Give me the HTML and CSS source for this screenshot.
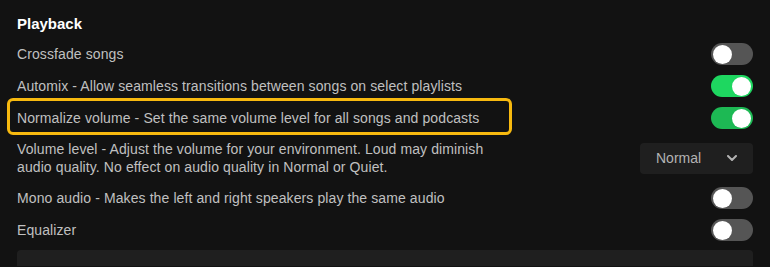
FILE: index.html
```html
<!DOCTYPE html>
<html>
<head>
<meta charset="utf-8">
<link rel="stylesheet" href="styles.css">
</head>
<body>
<section class="settings">
  <h2 class="title">Playback</h2>
  <div class="row">
    <span class="label">Crossfade songs</span>
    <span class="toggle"><span class="knob"></span></span>
  </div>
  <div class="row">
    <span class="label">Automix - Allow seamless transitions between songs on select playlists</span>
    <span class="toggle on"><span class="knob"></span></span>
  </div>
  <div class="row">
    <span class="label highlight">Normalize volume - Set the same volume level for all songs and podcasts</span>
    <span class="toggle on dim"><span class="knob"></span></span>
  </div>
  <div class="row tall">
    <span class="label wrap">Volume level - Adjust the volume for your environment. Loud may diminish audio quality. No effect on audio quality in Normal or Quiet.</span>
    <button class="select">
      <span>Normal</span>
      <svg width="10" height="6" viewBox="0 0 10 6"><path d="M1 1 L5 5 L9 1" fill="none" stroke="#b3b3b3" stroke-width="2" stroke-linecap="round" stroke-linejoin="round"/></svg>
    </button>
  </div>
  <div class="row">
    <span class="label">Mono audio - Makes the left and right speakers play the same audio</span>
    <span class="toggle"><span class="knob"></span></span>
  </div>
  <div class="row">
    <span class="label">Equalizer</span>
    <span class="toggle"><span class="knob"></span></span>
  </div>
  <div class="panel"></div>
</section>
</body>
</html>
```
FILE: styles.css
```css
html, body {
  margin: 0;
  padding: 0;
  background: #121212;
  height: 100%;
  overflow: hidden;
}
body {
  font-family: "Liberation Sans", Arial, sans-serif;
}
.settings {
  padding: 15px 17px 0 17px;
}
.title {
  margin: 0 0 5px 0;
  font-size: 15px;
  font-weight: 700;
  color: #ffffff;
  line-height: 18px;
  height: 18px;
}
.row {
  display: flex;
  align-items: center;
  justify-content: space-between;
  height: 32px;
}
.row.tall {
  height: 48px;
}
.label {
  font-size: 14px;
  color: #c0c0c0;
  line-height: 18px;
  letter-spacing: 0.1px;
}
.label.wrap {
  max-width: 495px;
}
.highlight {
  position: relative;
}
.highlight::after {
  content: "";
  position: absolute;
  left: -10px;
  top: -11px;
  width: 505px;
  height: 37px;
  box-sizing: border-box;
  border: 3px solid #f7b90f;
  border-radius: 6px;
}
.toggle {
  width: 42px;
  height: 22px;
  border-radius: 11px;
  background: #555555;
  display: flex;
  align-items: center;
  padding: 0 2px;
  box-sizing: border-box;
  flex-shrink: 0;
}
.toggle .knob {
  width: 19px;
  height: 19px;
  border-radius: 50%;
  background: #ffffff;
}
.toggle.on {
  background: #1ed760;
  justify-content: flex-end;
}
.toggle.on.dim {
  background: #1db954;
}
.select {
  width: 113px;
  height: 31px;
  background: #1f1f1f;
  border: none;
  border-radius: 4px;
  display: flex;
  align-items: center;
  justify-content: space-between;
  padding: 0 16px 0 16px;
  box-sizing: border-box;
  font-family: "Liberation Sans", Arial, sans-serif;
  font-size: 14px;
  color: #b3b3b3;
  flex-shrink: 0;
}
.panel {
  margin-top: 4px;
  height: 16px;
  background: #1f1f1f;
  border-radius: 4px 4px 0 0;
}
```
